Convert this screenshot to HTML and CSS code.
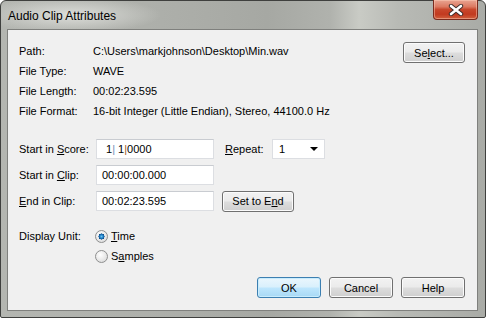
FILE: index.html
```html
<!DOCTYPE html>
<html lang="en">
<head>
  <meta charset="UTF-8">
  <meta name="viewport" content="width=device-width, initial-scale=1.0">
  <title>Audio Clip Attributes</title>
  <link rel="stylesheet" href="styles.css">
</head>
<body>
  <div class="window">
    <div class="titlebar">
      <span class="title">Audio Clip Attributes</span>
      <button type="button" class="close-btn" aria-label="Close">
        <svg width="16" height="12" viewBox="0 0 16 12">
          <path d="M3 2 L13 10 M13 2 L3 10" stroke="#3a2a28" stroke-width="4.4" stroke-linecap="round"/>
          <path d="M3 2 L13 10 M13 2 L3 10" stroke="#ffffff" stroke-width="2.6" stroke-linecap="round"/>
        </svg>
      </button>
    </div>

    <div class="client">
      <div class="info">
        <div class="info-grid">
          <span>Path:</span><span>C:\Users\markjohnson\Desktop\Min.wav</span>
          <span>File Type:</span><span>WAVE</span>
          <span>File Length:</span><span>00:02:23.595</span>
          <span>File Format:</span><span>16-bit Integer (Little Endian), Stereo, 44100.0 Hz</span>
        </div>
        <button type="button" class="btn select-btn">Se<u>l</u>ect...</button>
      </div>

      <div class="form">
        <div class="row">
          <label class="row-label">Start in <u>S</u>core:</label>
          <div class="field score">1<span class="bar-a">|</span>&nbsp;1<span class="bar-b">|</span>0000</div>
          <label class="repeat-label"><u>R</u>epeat:</label>
          <div class="combo">
            <span>1</span>
            <span class="arrow"></span>
          </div>
        </div>
        <div class="row">
          <label class="row-label">Start in <u>C</u>lip:</label>
          <div class="field">00:00:00.000</div>
        </div>
        <div class="row">
          <label class="row-label"><u>E</u>nd in Clip:</label>
          <div class="field">00:02:23.595</div>
          <button type="button" class="btn end-btn">Set to E<u>n</u>d</button>
        </div>
      </div>

      <div class="units">
        <span class="units-label">Display Unit:</span>
        <div class="radios">
          <div class="radio-item"><span class="radio checked"></span><span><u>T</u>ime</span></div>
          <div class="radio-item"><span class="radio"></span><span>S<u>a</u>mples</span></div>
        </div>
      </div>

      <div class="actions">
        <button type="button" class="btn default-btn">OK</button>
        <button type="button" class="btn">Cancel</button>
        <button type="button" class="btn">Help</button>
      </div>
    </div>
  </div>
</body>
</html>
```

FILE: styles.css
```css
body {
  margin: 0;
  font-family: "Liberation Sans", Arial, sans-serif;
  font-size: 11px;
  color: #000;
  background-color: #fff;
}
.window {
  box-sizing: border-box;
  width: 486px;
  height: 318px;
  padding: 0 7px 6px 6px;
  border: 1px solid #3f403e;
  border-radius: 6px 6px 2px 2px;
  background:
    radial-gradient(ellipse 90px 18px at 70px 14px, rgba(235, 236, 232, 0.75), rgba(235, 236, 232, 0) 100%),
    linear-gradient(to right, #b4b6b1 0%, #aeb0ab 30%, #a6a8a3 55%, #b0b2ad 68%, #c9cbc5 74%, #b8bab5 82%, #a9aba6 100%);
  display: flex;
  flex-direction: column;
}
.titlebar {
  height: 28px;
  display: flex;
  justify-content: space-between;
  align-items: flex-start;
  flex-shrink: 0;
}
.title {
  margin: 7px 0 0 1px;
  font-size: 12px;
  line-height: 16px;
}
.close-btn {
  box-sizing: border-box;
  width: 45px;
  height: 20px;
  margin-top: -1px;
  padding: 0;
  border: 1px solid #7a2b1e;
  border-top: none;
  border-radius: 0 0 4px 4px;
  background: linear-gradient(#e9a592 0%, #dc7a62 35%, #c8472c 50%, #c23a20 75%, #d0603e 100%);
  box-shadow: inset 0 0 0 1px rgba(255, 210, 190, 0.45);
  display: flex;
  align-items: center;
  justify-content: center;
}
.client {
  flex: 1;
  border: 1px solid #7f807d;
  background-color: #f0f0f0;
  padding: 11px 12px 0 11px;
}
.info {
  display: flex;
  justify-content: space-between;
  align-items: flex-start;
}
.info-grid {
  display: grid;
  grid-template-columns: 74px auto;
  grid-auto-rows: 20px;
  align-items: center;
}
.btn {
  box-sizing: border-box;
  height: 21px;
  width: 64px;
  padding: 0;
  font-family: "Liberation Sans", Arial, sans-serif;
  font-size: 11px;
  color: #000;
  border: 1px solid #707070;
  border-radius: 3px;
  background: linear-gradient(#f2f2f2 0%, #ebebeb 48%, #dddddd 52%, #cfcfcf 100%);
  box-shadow: inset 0 0 0 1px #fbfbfb;
}
.select-btn {
  width: 62px;
  margin-top: 1px;
}
.form {
  margin-top: 18px;
  display: flex;
  flex-direction: column;
  gap: 6px;
}
.row {
  display: flex;
  align-items: center;
  height: 20px;
}
.row-label {
  width: 77px;
}
.field {
  box-sizing: border-box;
  width: 118px;
  height: 20px;
  line-height: 18px;
  padding-left: 5px;
  background-color: #fff;
  border: 1px solid #dcdee2;
  border-top-color: #c9ccd1;
}
.score {
  padding-left: 9px;
}
.bar-a {
  color: #6b8fb8;
}
.bar-b {
  color: #9a5a22;
}
.repeat-label {
  margin-left: 11px;
  width: 47px;
}
.combo {
  box-sizing: border-box;
  width: 53px;
  height: 20px;
  padding: 0 6px;
  background-color: #fff;
  border: 1px solid #dcdee2;
  display: flex;
  align-items: center;
  justify-content: space-between;
}
.arrow {
  width: 0;
  height: 0;
  border-left: 4px solid transparent;
  border-right: 4px solid transparent;
  border-top: 4px solid #000;
}
.end-btn {
  width: 72px;
  margin-left: 8px;
}
.units {
  margin-top: 15px;
  display: flex;
}
.units-label {
  width: 76px;
  line-height: 20px;
}
.radios {
  display: flex;
  flex-direction: column;
}
.radio-item {
  height: 20px;
  display: flex;
  align-items: center;
  gap: 3px;
}
.radio {
  box-sizing: border-box;
  width: 13px;
  height: 13px;
  border-radius: 50%;
  border: 1px solid #8e8f8f;
  background: radial-gradient(circle at 40% 35%, #ffffff 0%, #e8e8e8 55%, #d2d2d2 100%);
}
.radio.checked {
  background:
    radial-gradient(circle 3.2px at 50% 50%, #6cc4f2 0%, #1f7fc6 55%, #0c4a86 90%, rgba(12, 74, 134, 0) 100%),
    radial-gradient(circle at 40% 35%, #ffffff 0%, #e8e8e8 55%, #d2d2d2 100%);
}
.actions {
  margin-top: 11px;
  display: flex;
  justify-content: flex-end;
  gap: 8px;
}
.default-btn {
  border-color: #3c7fb1;
  background: linear-gradient(#eaf6fd 0%, #d9f0fc 48%, #bee6fd 52%, #a7d9f5 100%);
  box-shadow: inset 0 0 0 1px #c8ecfd;
}
```
